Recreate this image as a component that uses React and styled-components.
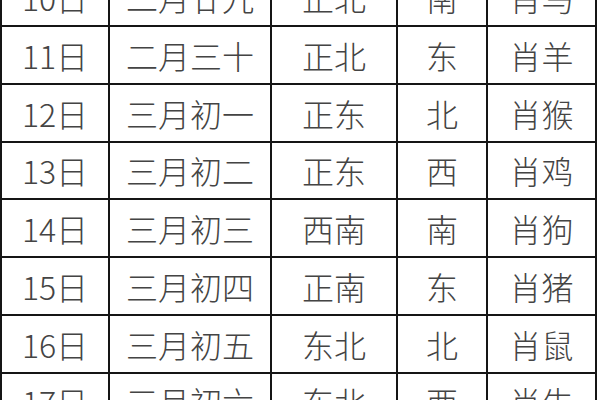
import React from "react";
import styled, { createGlobalStyle } from "styled-components";

const Global = createGlobalStyle`
  html, body { margin: 0; padding: 0; background: #fff; }
  body { width: 600px; height: 400px; overflow: hidden; }
`;

const Viewport = styled.div`
  width: 600px;
  height: 400px;
  overflow: hidden;
  background: #fff;
`;

const Grid = styled.div`
  display: grid;
  grid-template-columns: 108px 162px 126px 90px 109px;
  grid-auto-rows: 57.75px;
  width: 597px;
  margin-top: -30.75px;
  border-left: 2px solid #151515;
  box-sizing: border-box;
`;

const Cell = styled.div`
  box-sizing: border-box;
  border-right: 2px solid #151515;
  border-bottom: 2px solid #151515;
  display: flex;
  align-items: center;
  justify-content: center;
  font-family: "Noto Sans CJK SC", "Noto Sans", sans-serif;
  font-size: 32px;
  font-weight: 300;
  color: #444;
  line-height: 1;
`;

const rows = [
  ["10日", "二月廿九", "正北", "南", "肖马"],
  ["11日", "二月三十", "正北", "东", "肖羊"],
  ["12日", "三月初一", "正东", "北", "肖猴"],
  ["13日", "三月初二", "正东", "西", "肖鸡"],
  ["14日", "三月初三", "西南", "南", "肖狗"],
  ["15日", "三月初四", "正南", "东", "肖猪"],
  ["16日", "三月初五", "东北", "北", "肖鼠"],
  ["17日", "三月初六", "东北", "西", "肖牛"],
];

export default function App() {
  return (
    <Viewport>
      <Global />
      <Grid>
        {rows.map((r) =>
          r.map((c, i) => <Cell key={r[0] + i}>{c}</Cell>)
        )}
      </Grid>
    </Viewport>
  );
}
